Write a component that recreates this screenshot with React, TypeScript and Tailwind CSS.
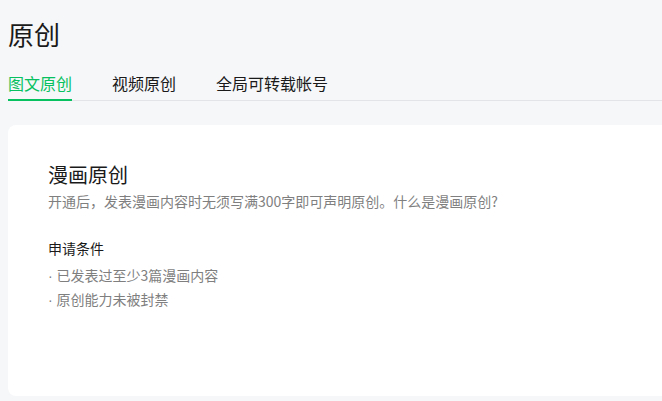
import React from "react";

const tabs = ["图文原创", "视频原创", "全局可转载帐号"];

const Bullet = () => (
  <span style={{ fontFamily: '"Liberation Sans", Arial, sans-serif' }}>·&nbsp;</span>
);

export default function App() {
  const active = 0;
  return (
    <div
      className="min-h-screen h-[401px] overflow-hidden bg-[#f6f7f9] pl-2 text-[#1a1a1a]"
      style={{ fontFamily: '"Noto Sans CJK SC", "Noto Sans", sans-serif' }}
    >
      <h1 className="pt-4 text-[26px] leading-[36px] font-normal">原创</h1>
      <div className="mt-[19px] flex gap-10 border-b border-[#e3e4e8]">
        {tabs.map((t, i) => (
          <div
            key={t}
            className={`-mb-px border-b-2 pb-1 text-[16px] leading-[24px] ${
              i === active ? "border-[#07c160] text-[#07c160]" : "border-transparent text-[#1a1a1a]"
            }`}
          >
            {t}
          </div>
        ))}
      </div>
      <div className="mt-6 -mr-4 h-[271px] rounded-lg bg-white pl-10 pt-9">
        <h2 className="text-[20px] leading-[28px] font-normal text-[#1a1a1a]">漫画原创</h2>
        <p className="mt-px text-[14px] leading-[22px] text-[#7f7f7f]">
          开通后，发表漫画内容时无须写满300字即可声明原创。什么是漫画原创?
        </p>
        <h3 className="mt-[25px] text-[14px] leading-[22px] font-normal text-[#1a1a1a]">申请条件</h3>
        <ul className="mt-[5px] text-[14px] leading-[23px] text-[#7f7f7f]">
          <li>
            <Bullet />
            已发表过至少3篇漫画内容
          </li>
          <li>
            <Bullet />
            原创能力未被封禁
          </li>
        </ul>
      </div>
    </div>
  );
}
